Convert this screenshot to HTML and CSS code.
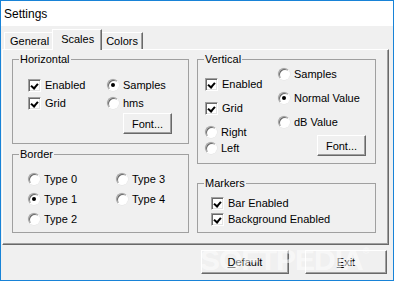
FILE: index.html
```html
<!DOCTYPE html>
<html lang="en">
<head>
    <meta charset="UTF-8">
    <title>Settings</title>
    <link rel="stylesheet" href="styles.css">
</head>
<body>

<div class="window">
    <div class="titlebar">Settings</div>

    <div class="tabs">
        <div class="tab">General</div>
        <div class="tab active">Scales</div>
        <div class="tab">Colors</div>
    </div>

    <div class="panel">
        <div class="col left-col">
            <fieldset class="group horizontal">
                <legend>Horizontal</legend>
                <div class="hgrid">
                    <label class="opt"><span class="cb checked"></span>Enabled</label>
                    <label class="opt"><span class="rb on"></span>Samples</label>
                    <label class="opt"><span class="cb checked"></span>Grid</label>
                    <label class="opt"><span class="rb"></span>hms</label>
                    <span></span>
                    <button class="btn font-btn">Font...</button>
                </div>
            </fieldset>

            <fieldset class="group border-group">
                <legend>Border</legend>
                <div class="bgrid">
                    <label class="opt"><span class="rb"></span>Type 0</label>
                    <label class="opt"><span class="rb"></span>Type 3</label>
                    <label class="opt"><span class="rb on"></span>Type 1</label>
                    <label class="opt"><span class="rb"></span>Type 4</label>
                    <label class="opt"><span class="rb"></span>Type 2</label>
                </div>
            </fieldset>
        </div>

        <div class="col right-col">
            <fieldset class="group vertical">
                <legend>Vertical</legend>
                <div class="vcols">
                    <div class="vleft">
                        <label class="opt tall"><span class="cb checked"></span>Enabled</label>
                        <label class="opt tall"><span class="cb checked"></span>Grid</label>
                        <div class="pair">
                            <label class="opt"><span class="rb"></span>Right</label>
                            <label class="opt"><span class="rb"></span>Left</label>
                        </div>
                    </div>
                    <div class="vright">
                        <label class="opt"><span class="rb"></span>Samples</label>
                        <label class="opt"><span class="rb on"></span>Normal Value</label>
                        <label class="opt"><span class="rb"></span>dB Value</label>
                        <button class="btn font-btn">Font...</button>
                    </div>
                </div>
            </fieldset>

            <fieldset class="group markers">
                <legend>Markers</legend>
                <div class="mlist">
                    <label class="opt"><span class="cb checked"></span>Bar Enabled</label>
                    <label class="opt"><span class="cb checked"></span>Background Enabled</label>
                </div>
            </fieldset>
        </div>
    </div>

    <div class="actions">
        <button class="btn default-btn"><u>D</u>efault</button>
        <button class="btn exit-btn"><u>E</u>xit</button>
    </div>

    <div class="watermark" aria-hidden="true">SOFTPEDIA<sup>®</sup></div>
</div>

</body>
</html>
```

FILE: styles.css
```css
* {
    box-sizing: border-box;
}

body {
    margin: 0;
    font-family: "Liberation Sans", Arial, sans-serif;
    font-size: 11px;
    color: #000;
}

.window {
    position: relative;
    width: 394px;
    height: 281px;
    border: 1px solid #1883d7;
    background: #f0f0f0;
    overflow: hidden;
}

.titlebar {
    height: 25px;
    background: #fff;
    padding: 1px 0 0 3px;
    font-size: 12px;
    line-height: 24px;
}

/* tab strip */
.tabs {
    display: flex;
    align-items: flex-end;
    height: 23px;
    padding-left: 3px;
}

.tab {
    height: 17px;
    padding: 1px 4px 0 5px;
    border: 1px solid;
    border-color: #fff #696969 transparent #fff;
    border-bottom: none;
    box-shadow: inset -1px 0 #a0a0a0;
    font-size: 11px;
    line-height: 15px;
    background: #f0f0f0;
}

.tab.active {
    position: relative;
    z-index: 1;
    height: 21px;
    margin: 0 -2px -1px -2px;
    padding: 1px 7px 0 8px;
    line-height: 17px;
}

.panel {
    display: flex;
    gap: 8px;
    width: 387px;
    height: 196px;
    margin-left: 1px;
    padding: 3px 0 0 9px;
    border: 1px solid;
    border-color: #fff #696969 #696969 #fff;
    box-shadow: inset -1px -1px #a0a0a0;
}

.col {
    display: flex;
    flex-direction: column;
}

.left-col {
    width: 177px;
    gap: 4px;
}

.right-col {
    width: 179px;
    gap: 13px;
}

.group {
    margin: 0;
    padding: 0;
    border: 1px solid #a0a0a0;
    min-width: 0;
}

.group legend {
    margin-left: 6px;
    padding: 0 1px;
    line-height: 13px;
}

.horizontal { height: 91px; }
.border-group { height: 85px; }
.vertical { height: 111px; }
.markers { height: 56px; }

/* options */
.opt {
    display: flex;
    align-items: center;
    gap: 4px;
    height: 16px;
    white-space: nowrap;
}

.cb {
    position: relative;
    flex: none;
    width: 13px;
    height: 13px;
    background: #fff;
    border: 1px solid;
    border-color: #a0a0a0 #fff #fff #a0a0a0;
    box-shadow: inset 1px 1px #696969, inset -1px -1px #e3e3e3;
}

.cb.checked::after {
    content: "";
    position: absolute;
    left: 3px;
    top: 2px;
    width: 3px;
    height: 5px;
    border: solid #000;
    border-width: 0 2px 2px 0;
    transform: rotate(40deg);
    transform-origin: center;
}

.rb {
    position: relative;
    flex: none;
    width: 12px;
    height: 12px;
    border-radius: 50%;
    background: #fff;
    border: 1px solid;
    border-color: #a0a0a0 #fff #fff #a0a0a0;
    box-shadow: inset 1px 1px #696969, 0 0 0 0.5px #e3e3e3;
}

.rb.on::after {
    content: "";
    position: absolute;
    left: 3px;
    top: 3px;
    width: 4px;
    height: 4px;
    border-radius: 50%;
    background: #000;
}

/* buttons */
.btn {
    font-family: inherit;
    font-size: 11px;
    color: #000;
    background: #f0f0f0;
    border: 1px solid;
    border-color: #fff #696969 #696969 #fff;
    box-shadow: inset -1px -1px #a0a0a0;
    padding: 0;
}

.font-btn {
    width: 49px;
    height: 21px;
}

.hgrid {
    display: grid;
    grid-template-columns: 79px auto;
    grid-template-rows: 16px 16px 21px;
    row-gap: 2px;
    padding: 11px 0 0 15px;
}

.hgrid .font-btn {
    margin-left: 16px;
}

.bgrid {
    display: grid;
    grid-template-columns: 88px auto;
    grid-auto-rows: 16px;
    row-gap: 4px;
    padding: 10px 0 0 15px;
}

.vcols {
    display: flex;
    padding-left: 7px;
}

.vleft {
    width: 73px;
    padding-top: 6px;
}

.vleft .tall {
    height: 24px;
}

.pair {
    margin-top: 4px;
}

.vright {
    display: flex;
    flex-direction: column;
    gap: 8px;
}

.vright .font-btn {
    margin: -3px 0 0 39px;
}

.mlist {
    padding: 5px 0 0 13px;
}

.actions {
    display: flex;
    justify-content: flex-end;
    gap: 16px;
    padding: 5px 6px 0 0;
}

.actions .btn {
    height: 24px;
}

.default-btn { width: 88px; }
.exit-btn { width: 82px; }

/* faint site watermark lying over the buttons */
.watermark {
    position: absolute;
    left: 199px;
    top: 242px;
    font-size: 30px;
    font-weight: bold;
    letter-spacing: -1px;
    color: rgba(255, 255, 255, 0.55);
    pointer-events: none;
}

.watermark sup {
    font-size: 9px;
    vertical-align: 16px;
}
```
